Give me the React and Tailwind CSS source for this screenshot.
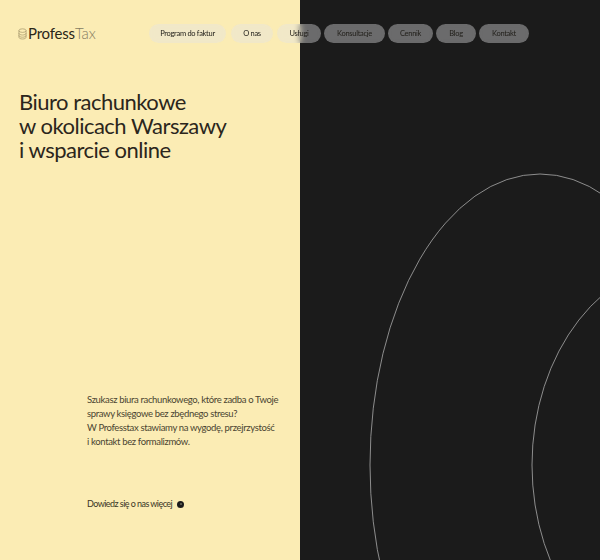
import React from "react";

const nav = [
  ["Program do faktur", "w-[77px]"],
  ["O nas", "ml-[2px] w-[42px]"],
  ["Usługi", "ml-[1px] w-[44px]"],
  ["Konsultacje", "w-[61px]"],
  ["Cennik", "w-[45px]"],
  ["Blog", "w-[40px]"],
  ["Kontakt", "w-[50px]"],
];

function LogoMark() {
  return (
    <svg width="9" height="12" viewBox="0 0 9 12" fill="none" stroke="#a3956a" strokeWidth="0.7">
      <ellipse cx="4.5" cy="2.6" rx="3.6" ry="1.8" />
      <path d="M0.9 2.6V9.2C0.9 10.3 2.5 11 4.5 11S8.1 10.3 8.1 9.2V2.6" />
      <path d="M0.9 5.2C0.9 6.3 2.5 7 4.5 7S8.1 6.3 8.1 5.2" />
      <path d="M0.9 7.4C0.9 8.5 2.5 9.2 4.5 9.2S8.1 8.5 8.1 7.4" />
    </svg>
  );
}

export default function App() {
  return (
    <div className="relative flex h-[560px] w-[600px] overflow-hidden font-['Lato',sans-serif] text-[#2a2618]">
      <main className="flex w-[300px] flex-col bg-[#fbecb4]">
        <div className="flex h-[24px] shrink-0" />
        <div className="flex h-[19px] items-center gap-[1px] pl-[18px]">
          <LogoMark />
          <span className="text-[15px] leading-none font-normal tracking-[-0.2px]">
            Profess<span className="font-light text-[#857c62]">Tax</span>
          </span>
        </div>
        <h1 className="mt-[47px] pl-[19px] text-[22px] leading-[24px] font-normal tracking-[-0.5px] whitespace-nowrap text-[#2b261c]">
          Biuro rachunkowe
          <br />w okolicach Warszawy
          <br />i wsparcie online
        </h1>
        <p className="mt-[231px] pl-[87px] text-[9.5px] leading-[14px] tracking-[-0.35px] whitespace-nowrap text-[#4a4431]">
          Szukasz biura rachunkowego, które zadba o Twoje
          <br />sprawy księgowe bez zbędnego stresu?
          <br />W Professtax stawiamy na wygodę, przejrzystość
          <br />i kontakt bez formalizmów.
        </p>
        <div className="mt-[48px] flex items-center gap-[5px] pl-[87px] text-[9px] leading-[14px] tracking-[-0.55px] text-[#3a3524]">
          <span>Dowiedz się o nas więcej</span>
          <span className="flex h-[7px] w-[7px] items-center justify-center rounded-full bg-[#1b1b1b]">
            <span className="h-[2px] w-[2px] rounded-full bg-[#6b6b60]" />
          </span>
        </div>
      </main>
      <section className="relative w-[300px] bg-[#1b1b1b]">
        <svg width="300" height="560" viewBox="300 0 300 560" fill="none" stroke="#a9a9a9" strokeWidth="0.8" className="block">
          <ellipse cx="540" cy="465" rx="170" ry="291" />
          <ellipse cx="692" cy="465" rx="160" ry="205" />
        </svg>
      </section>
      <nav className="absolute top-[24px] left-[149px] flex gap-[3px] text-[7.5px] leading-none tracking-[-0.3px] text-[#23211c]">
        {nav.map(([label, w]) => (
          <a
            key={label}
            className={`flex h-[19px] items-center justify-center rounded-full bg-[#e3e3e6]/40 backdrop-blur-[3px] ${w}`}
          >
            {label}
          </a>
        ))}
      </nav>
    </div>
  );
}
